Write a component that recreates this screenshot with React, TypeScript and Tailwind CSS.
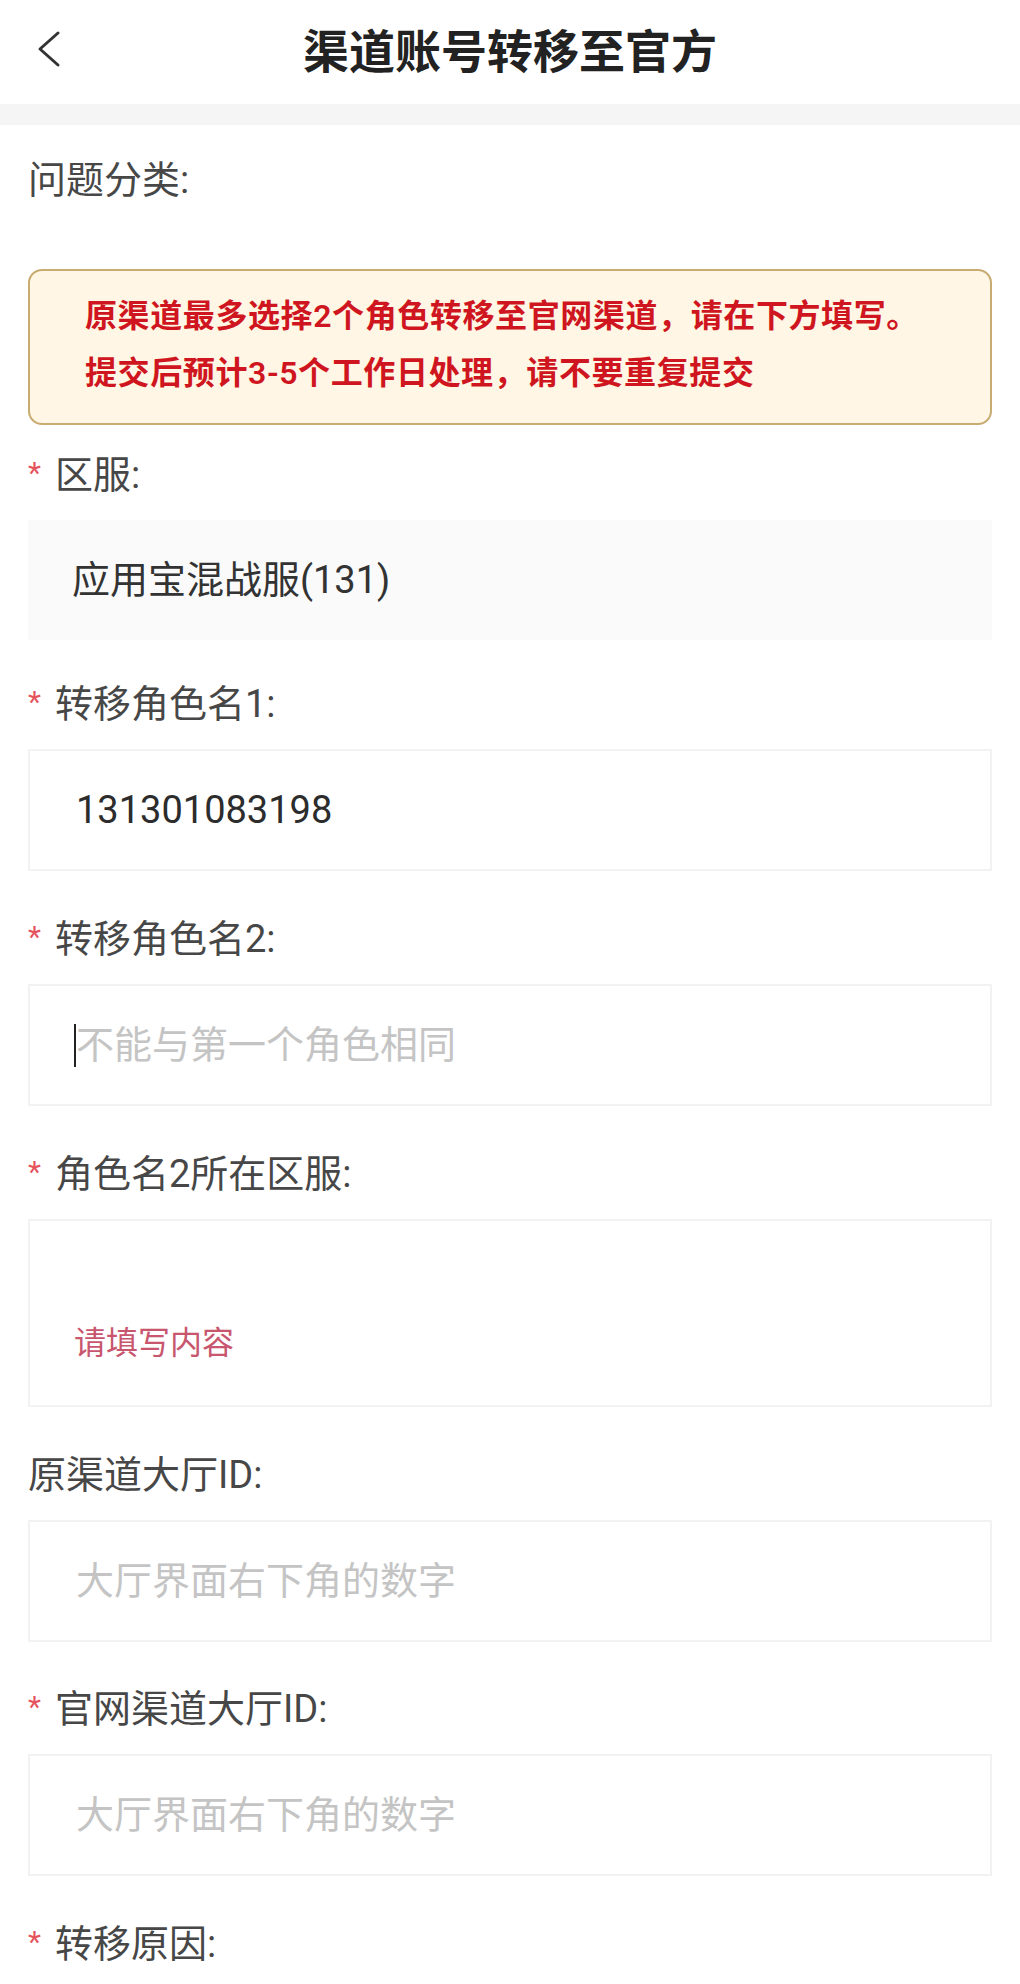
import React from 'react';

const font = { fontFamily: 'Roboto, "Noto Sans CJK SC", sans-serif' };

function Label({ text, required }: { text: string; required?: boolean }) {
  return (
    <div className="flex h-[50px] items-center text-[38px] leading-[50px] text-[#474747]">
      {required ? <span className="inline-block w-[27px] -translate-y-[2px] text-[30px] text-[#e5535d]">*</span> : null}
      <span>{text}</span>
    </div>
  );
}

function Box({ children, className = '' }: { children?: React.ReactNode; className?: string }) {
  return (
    <div className={`flex h-[122px] items-center border-2 border-[#f2f2f2] bg-white pl-[46px] text-[38px] ${className}`}>
      {children}
    </div>
  );
}

export default function App() {
  return (
    <main className="min-h-screen w-full bg-white" style={font}>
      <header className="relative flex h-[104px] items-center justify-center bg-white">
        <svg className="absolute left-[36px] top-[30px]" width="28" height="40" viewBox="0 0 28 40" fill="none">
          <polyline points="22,3 4,19 22,35" stroke="#333" strokeWidth="3" strokeLinecap="round" strokeLinejoin="round" />
        </svg>
        <h1 className="text-[46px] font-bold leading-none text-[#222]">渠道账号转移至官方</h1>
      </header>
      <div className="h-[21px] bg-[#f5f5f5]" />

      <div className="px-[28px] pt-[30px] pb-[20px]">
        <Label text="问题分类:" />

        <div className="mt-[64px] rounded-[14px] border-2 border-[#c8ab70] bg-[#fff6e5] pl-[55px] pt-[17px] pb-[21px] text-[32px] font-semibold leading-[57px] tracking-[0.6px] text-[#cf1620]">
          <p>原渠道最多选择2个角色转移至官网渠道，请在下方填写。</p>
          <p>提交后预计3-5个工作日处理，请不要重复提交</p>
        </div>

        <div className="mt-[25px]">
          <Label text="区服:" required />
        </div>
        <div className="mt-[20px] flex h-[120px] items-center bg-[#fafafa] pl-[44px] text-[38px] text-[#333]">
          应用宝混战服(131)
        </div>

        <div className="mt-[39px]">
          <Label text="转移角色名1:" required />
        </div>
        <Box className="mt-[20px] text-[#2c2c2c]">131301083198</Box>

        <div className="mt-[43px]">
          <Label text="转移角色名2:" required />
        </div>
        <Box className="mt-[20px] text-[#c4c4c4]">
          <span className="-ml-[2px] inline-block h-[43px] w-[2px] bg-[#222]" />
          <span>不能与第一个角色相同</span>
        </Box>

        <div className="mt-[43px]">
          <Label text="角色名2所在区服:" required />
        </div>
        <div className="mt-[20px] flex h-[188px] flex-col justify-end border-2 border-[#f2f2f2] bg-white pb-[46px] pl-[44px]">
          <span className="text-[32px] leading-[32px] text-[#c8566e]">请填写内容</span>
        </div>

        <div className="mt-[43px]">
          <Label text="原渠道大厅ID:" />
        </div>
        <Box className="mt-[20px] text-[#c4c4c4]">大厅界面右下角的数字</Box>

        <div className="mt-[42px]">
          <Label text="官网渠道大厅ID:" required />
        </div>
        <Box className="mt-[20px] text-[#c4c4c4]">大厅界面右下角的数字</Box>

        <div className="mt-[43px]">
          <Label text="转移原因:" required />
        </div>
      </div>
    </main>
  );
}
